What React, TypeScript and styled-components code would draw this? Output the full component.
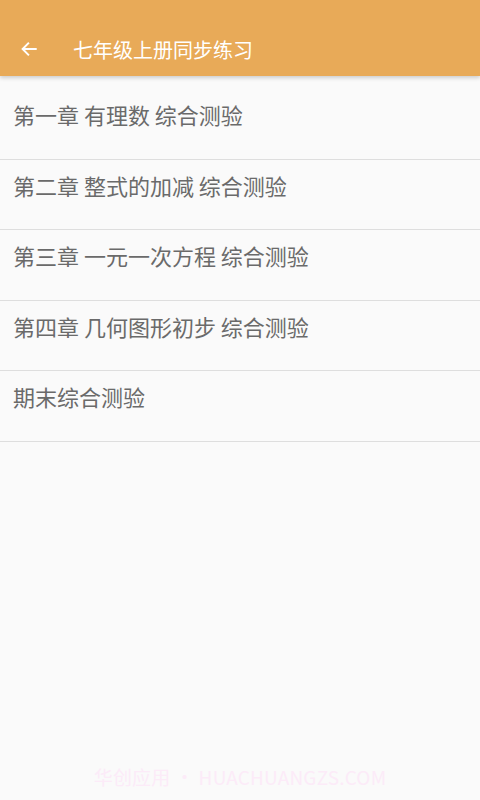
import styled, { createGlobalStyle } from "styled-components";

const GlobalStyle = createGlobalStyle`
  html, body {
    margin: 0;
    padding: 0;
    background: #fafafa;
  }
  body {
    font-family: "Noto Sans CJK SC", "Noto Sans", sans-serif;
  }
`;

const CHAPTERS = [
  "第一章 有理数 综合测验",
  "第二章 整式的加减 综合测验",
  "第三章 一元一次方程 综合测验",
  "第四章 几何图形初步 综合测验",
  "期末综合测验",
];

const Page = styled.div`
  display: flex;
  flex-direction: column;
  width: 480px;
  height: 800px;
  background: #fafafa;
  overflow: hidden;
`;

const Toolbar = styled.header`
  display: flex;
  align-items: center;
  height: 76px;
  padding: 22px 0 0 18px;
  box-sizing: border-box;
  background: #e8aa58;
  box-shadow: 0 2px 4px rgba(0, 0, 0, 0.18);
  color: #fff;
  position: relative;
  z-index: 1;
`;

const BackButton = styled.div`
  display: flex;
  align-items: center;
  justify-content: center;
  width: 22px;
  height: 22px;
`;

const Title = styled.h1`
  margin: 0 0 0 33px;
  font-size: 20px;
  font-weight: 400;
`;

const List = styled.ul`
  list-style: none;
  margin: 0;
  padding: 13px 0 0;
`;

const Row = styled.li`
  height: 70.5px;
  box-sizing: border-box;
  padding: 10px 0 0 13px;
  border-bottom: 1px solid #dedede;
  font-size: 22px;
  line-height: 30px;
  color: #6a6a6a;
`;

const Watermark = styled.div`
  margin-top: auto;
  padding-bottom: 10px;
  text-align: center;
  font-size: 19px;
  color: #fcebf8;
  letter-spacing: 0.2px;
`;

const App = () => (
  <Page>
    <GlobalStyle />
    <Toolbar>
      <BackButton>
        <svg width="18" height="18" viewBox="0 0 24 24" fill="none" stroke="#fff" strokeWidth="2.6" strokeLinecap="square">
          <path d="M21 12H4M11 4.5L3.5 12l7.5 7.5" />
        </svg>
      </BackButton>
      <Title>七年级上册同步练习</Title>
    </Toolbar>
    <List>
      {CHAPTERS.map((c) => (
        <Row key={c}>{c}</Row>
      ))}
    </List>
    <Watermark>华创应用 · HUACHUANGZS.COM</Watermark>
  </Page>
);

export default App;
